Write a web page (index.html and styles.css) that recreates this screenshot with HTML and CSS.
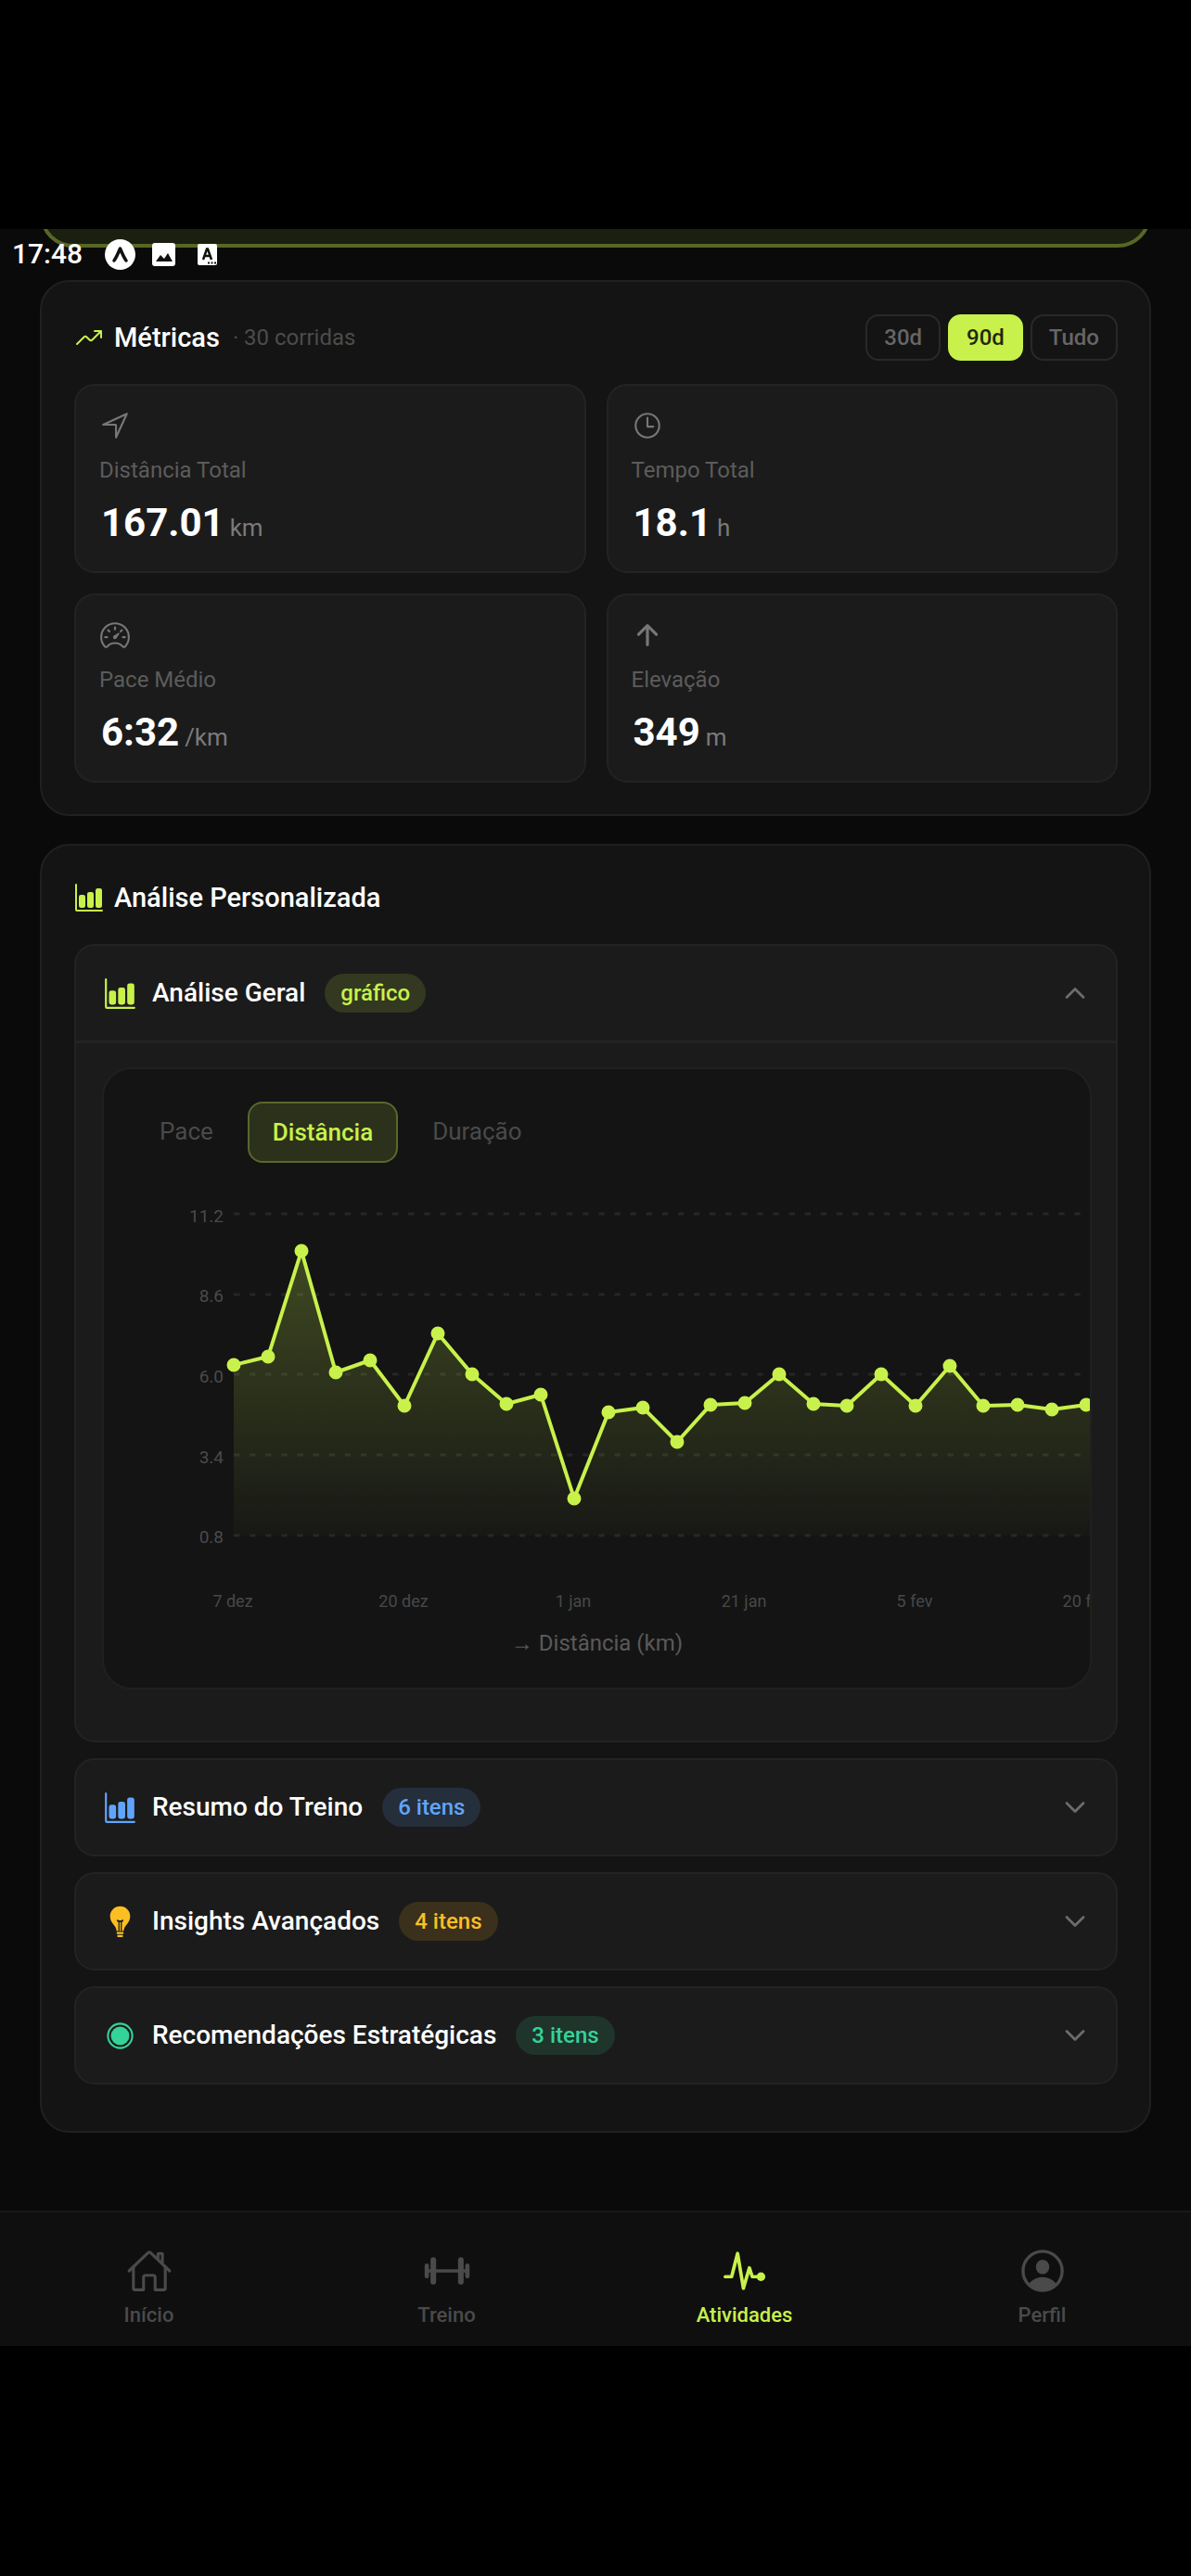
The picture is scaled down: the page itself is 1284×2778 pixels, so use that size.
FILE: index.html
```html
<!DOCTYPE html>
<html lang="pt-BR">
<head>
<meta charset="utf-8">
<meta name="viewport" content="width=device-width, initial-scale=1">
<title>Atividades</title>
<link rel="stylesheet" href="styles.css">
</head>
<body>
<svg class="sprite" aria-hidden="true">
  <symbol id="i-bars" viewBox="0 0 512 512"><path fill="currentColor" d="M480 496H48a32 32 0 01-32-32V32a16 16 0 0132 0v432h432a16 16 0 010 32zM156 432h-40a36 36 0 01-36-36V244a36 36 0 0136-36h40a36 36 0 0136 36v152a36 36 0 01-36 36zM300 432h-40a36 36 0 01-36-36V196a36 36 0 0136-36h40a36 36 0 0136 36v200a36 36 0 01-36 36zM444 432h-40a36 36 0 01-36-36V132a36 36 0 0136-36h40a36 36 0 0136 36v264a36 36 0 01-36 36z"/></symbol>
  <symbol id="i-down" viewBox="0 0 512 512"><path fill="none" stroke="currentColor" stroke-width="44" stroke-linecap="round" stroke-linejoin="round" d="M112 184l144 144 144-144"/></symbol>
  <symbol id="i-up" viewBox="0 0 512 512"><path fill="none" stroke="currentColor" stroke-width="44" stroke-linecap="round" stroke-linejoin="round" d="M112 328l144-144 144 144"/></symbol>
</svg>

<div class="app">
  <div class="status">
    <span class="status-time">17:48</span>
    <svg class="status-circle" viewBox="0 0 33 33" aria-hidden="true"><circle cx="16.500" cy="16.500" r="16.500" fill="#fff"/><path d="M10 23c3-4 4.500-8.500 6.500-13 2 4.500 3.500 9 6.500 13" fill="none" stroke="#111" stroke-width="3.500" stroke-linecap="round" stroke-linejoin="round"/></svg>
    <svg class="status-image" viewBox="0 0 25 25" aria-hidden="true"><rect width="25" height="25" rx="3" fill="#fff"/><path d="M4 20l5-7 4 4 4-6 5 9z" fill="#111"/></svg>
    <svg class="status-doc" viewBox="0 0 21 23" aria-hidden="true"><rect width="21" height="23" rx="2" fill="#fff"/><path d="M6 17L10 5.500h1L15 17M7.500 13h6" fill="none" stroke="#111" stroke-width="2.500"/><path d="M11 20.500h2M14.500 20.500h2M18 20.500h2" stroke="#111" stroke-width="2"/></svg>
  </div>

  <main class="scroll">
    <div class="highlight"></div>

    <section class="card metrics">
      <header class="metrics-head">
        <svg class="icon-title lime" viewBox="0 0 512 512" fill="none" stroke="currentColor" stroke-width="32" stroke-linecap="round" stroke-linejoin="round" aria-hidden="true"><path d="M352 144h112v112M48 368l121-121a32 32 0 0146 0l50 50a32 32 0 0046 0L448 160"/></svg>
        <h2>Métricas</h2>
        <span class="count">· 30 corridas</span>
        <div class="ranges">
          <button type="button" class="range">30d</button>
          <button type="button" class="range range-on">90d</button>
          <button type="button" class="range">Tudo</button>
        </div>
      </header>
      <div class="tiles">
        <div class="tile">
          <svg class="icon-tile" viewBox="0 0 512 512" fill="none" stroke="currentColor" stroke-width="32" stroke-linejoin="round" aria-hidden="true"><path d="M448 64L64 240h200a8 8 0 018 8v200z"/></svg>
          <span class="tile-label">Distância Total</span>
          <p class="tile-value"><strong>167.01</strong><span>km</span></p>
        </div>
        <div class="tile">
          <svg class="icon-tile" viewBox="0 0 512 512" fill="none" stroke="currentColor" stroke-width="32" stroke-linecap="round" stroke-linejoin="round" aria-hidden="true"><circle cx="256" cy="256" r="192"/><path d="M256 128v144h96"/></svg>
          <span class="tile-label">Tempo Total</span>
          <p class="tile-value"><strong>18.1</strong><span>h</span></p>
        </div>
        <div class="tile">
          <svg class="icon-tile" viewBox="0 0 512 512" fill="none" stroke="currentColor" stroke-width="32" stroke-linecap="round" aria-hidden="true"><path d="M326 232l-47 75a31 31 0 01-7 7 30 30 0 01-35-49l75-47a10 10 0 0112 0 10 10 0 012 14z" fill="currentColor" stroke="none"/><path stroke-miterlimit="10" d="M256 64C132 64 32 164 32 288a223 223 0 0056 148l4 4a25 25 0 0037 0 173 173 0 01254 0 25 25 0 0037 0l4-4a223 223 0 0056-148C480 164 380 64 256 64z"/><path d="M256 128v32M416 288h-32M128 288H96M165 197l-22-22M347 197l22-22"/></svg>
          <span class="tile-label">Pace Médio</span>
          <p class="tile-value"><strong>6:32</strong><span>/km</span></p>
        </div>
        <div class="tile">
          <svg class="icon-tile" viewBox="0 0 512 512" fill="none" stroke="currentColor" stroke-width="48" stroke-linecap="round" stroke-linejoin="round" aria-hidden="true"><path d="M112 244l144-144 144 144M256 120v292"/></svg>
          <span class="tile-label">Elevação</span>
          <p class="tile-value"><strong>349</strong><span>m</span></p>
        </div>
      </div>
    </section>

    <section class="card analysis">
      <header class="analysis-head">
        <svg class="icon-title lime" aria-hidden="true"><use href="#i-bars"/></svg>
        <h2>Análise Personalizada</h2>
      </header>

      <div class="panels">
        <article class="panel">
          <button type="button" class="panel-head" aria-expanded="true">
            <svg class="icon-panel lime" aria-hidden="true"><use href="#i-bars"/></svg>
            <span class="panel-title">Análise Geral</span>
            <span class="pill pill-lime">gráfico</span>
            <svg class="chevron" aria-hidden="true"><use href="#i-up"/></svg>
          </button>
          <div class="panel-body">
            <div class="chart-card">
              <div class="tabs">
                <button type="button" class="tab">Pace</button>
                <button type="button" class="tab tab-on">Distância</button>
                <button type="button" class="tab">Duração</button>
              </div>
              <div class="chart-view">
                <svg class="chart" width="1160" height="456" viewBox="0 0 1160 456" role="img" aria-label="Distância (km)">
                  <defs><linearGradient id="fade" gradientUnits="userSpaceOnUse" x1="0" y1="58" x2="0" y2="366"><stop offset="0" stop-color="#c8f14b" stop-opacity=".24"/><stop offset="1" stop-color="#c8f14b" stop-opacity=".02"/></linearGradient></defs>
                  <g class="grid"><path d="M140 19H1160"/><path d="M140 106H1160"/><path d="M140 192H1160"/><path d="M140 279H1160"/><path d="M140 366H1160"/></g>
                  <path fill="url(#fade)" d="M140 366V182L177 173L213 59L250 190L287 177L324 226L360 148L397 192L434 224L471 214L507 326L544 233L581 228L618 265L654 225L691 223L728 192L765 224L801 226L838 192L875 226L912 183L948 226L985 225L1022 230L1059 225L1095 222V366z"/>
                  <path class="line" d="M140 182L177 173L213 59L250 190L287 177L324 226L360 148L397 192L434 224L471 214L507 326L544 233L581 228L618 265L654 225L691 223L728 192L765 224L801 226L838 192L875 226L912 183L948 226L985 225L1022 230L1059 225L1095 222"/>
                  <path class="dots" d="M140 182h0M177 173h0M213 59h0M250 190h0M287 177h0M324 226h0M360 148h0M397 192h0M434 224h0M471 214h0M507 326h0M544 233h0M581 228h0M618 265h0M654 225h0M691 223h0M728 192h0M765 224h0M801 226h0M838 192h0M875 226h0M912 183h0M948 226h0M985 225h0M1022 230h0M1059 225h0"/>
                  <g class="y-labels"><text x="129" y="28">11.2</text><text x="129" y="114">8.6</text><text x="129" y="201">6.0</text><text x="129" y="288">3.4</text><text x="129" y="374">0.8</text></g>
                  <g class="x-labels"><text x="139" y="443">7 dez</text><text x="323" y="443">20 dez</text><text x="506" y="443">1 jan</text><text x="690" y="443">21 jan</text><text x="874" y="443">5 fev</text><text x="1058" y="443">20 fev</text></g>
                </svg>
              </div>
              <p class="legend">→ Distância (km)</p>
            </div>
          </div>
        </article>

        <article class="panel">
          <button type="button" class="panel-head" aria-expanded="false">
            <svg class="icon-panel blue" aria-hidden="true"><use href="#i-bars"/></svg>
            <span class="panel-title">Resumo do Treino</span>
            <span class="pill pill-blue">6 itens</span>
            <svg class="chevron" aria-hidden="true"><use href="#i-down"/></svg>
          </button>
        </article>
        <article class="panel">
          <button type="button" class="panel-head" aria-expanded="false">
            <svg class="icon-panel amber" viewBox="0 0 512 512" aria-hidden="true"><path fill="currentColor" d="M256 10C168 10 98 80 98 168c0 54 22 88 46 120 28 36 50 60 54 104 2 8 6 12 14 12h16V258c-14-4-26-10-26-24s14-16 24-8c18 12 42 12 60 0 10-8 24-6 24 8s-12 20-26 24v146h16c8 0 12-4 14-12 4-44 26-68 54-104 24-32 46-66 46-120 0-88-70-158-158-158z"/><path fill="currentColor" d="M247 262h18v142h-18z"/><path fill="none" stroke="currentColor" stroke-width="32" stroke-linecap="round" d="M216 434h80M226 482h60"/></svg>
            <span class="panel-title">Insights Avançados</span>
            <span class="pill pill-amber">4 itens</span>
            <svg class="chevron" aria-hidden="true"><use href="#i-down"/></svg>
          </button>
        </article>
        <article class="panel">
          <button type="button" class="panel-head" aria-expanded="false">
            <svg class="icon-panel green" viewBox="0 0 512 512" aria-hidden="true"><circle cx="256" cy="256" r="192" fill="none" stroke="currentColor" stroke-width="30"/><circle cx="256" cy="256" r="146" fill="currentColor"/></svg>
            <span class="panel-title">Recomendações Estratégicas</span>
            <span class="pill pill-green">3 itens</span>
            <svg class="chevron" aria-hidden="true"><use href="#i-down"/></svg>
          </button>
        </article>
      </div>
    </section>
  </main>

  <nav class="tabbar">
    <a href="#inicio"><svg viewBox="0 0 512 512" fill="none" stroke="currentColor" stroke-width="32" stroke-linecap="round" stroke-linejoin="round" aria-hidden="true"><path d="M80 212v236a16 16 0 0016 16h96V328a24 24 0 0124-24h80a24 24 0 0124 24v136h96a16 16 0 0016-16V212"/><path d="M480 256L267 52c-5-5-17-5-22 0L32 256M400 179V64h-48v69"/></svg>Início</a>
    <a href="#treino"><svg viewBox="0 0 512 512" fill="none" stroke="currentColor" stroke-linecap="round" aria-hidden="true"><path stroke-width="36" d="M32 256h448"/><path stroke-width="48" d="M32 198v116M480 198v116"/><path stroke-width="62" d="M104 136v240M408 136v240"/></svg>Treino</a>
    <a href="#atividades" class="current" aria-current="page"><svg viewBox="0 0 512 512" fill="none" stroke="currentColor" stroke-width="38" stroke-linecap="round" stroke-linejoin="round" aria-hidden="true"><path d="M40 320h70l66-256 64 384 66-226 32 98h94"/><circle cx="434" cy="320" r="48" fill="currentColor" stroke="none"/></svg>Atividades</a>
    <a href="#perfil"><svg viewBox="0 0 512 512" aria-hidden="true"><circle cx="256" cy="256" r="216" fill="none" stroke="currentColor" stroke-width="34"/><ellipse cx="256" cy="212" rx="74" ry="80" fill="currentColor"/><path fill="currentColor" d="M100 404C140 350 196 324 256 324s116 26 156 80a216 216 0 01-312 0z"/></svg>Perfil</a>
  </nav>
</div>
</body>
</html>
```
FILE: styles.css
```css
* { box-sizing: border-box; }

:root {
  --lime: #c8f14b;
  --blue: #60a5fa;
  --amber: #fbbf24;
  --green: #34d399;
  --card: #141414;
  --tile: #1b1b1b;
  --edge: #232323;
}

body {
  margin: 0;
  padding: 247px 0 248px;
  background: #000;
  color: #fff;
  font: 24px/28px Roboto, "Noto Sans", sans-serif;
}

h2, p { margin: 0; }
button { font: inherit; color: inherit; background: none; border: 0; padding: 0; margin: 0; }
svg { flex: none; display: block; }
.sprite { position: absolute; width: 0; height: 0; }

.app { position: relative; overflow: hidden; background: #0a0a0a; }

.status {
  position: absolute;
  top: 10px;
  left: 13px;
  display: flex;
  align-items: center;
  height: 34px;
}
.status-time { font-size: 30px; font-weight: 500; }
.status-circle { width: 33px; height: 33px; margin-left: 24px; }
.status-image { width: 25px; height: 25px; margin-left: 18px; }
.status-doc { width: 21px; height: 23px; margin-left: 24px; }

.scroll { padding: 0 43px 84px; }

.highlight {
  height: 100px;
  margin: -80px 0 35px;
  background: #1b1f10;
  border: 4px solid #586723;
  border-radius: 36px;
}

.card {
  background: var(--card);
  border: 2px solid #202020;
  border-radius: 32px;
}
.card h2 { font-size: 29px; line-height: 40px; font-weight: 500; }

.metrics { padding: 35px 34px 34px 35px; }
.metrics-head { display: flex; align-items: center; margin-bottom: 25px; }
.metrics-head h2 { margin: 0 14px 0 11px; }
.icon-title { width: 32px; height: 32px; }
.lime { color: var(--lime); }
.blue { color: var(--blue); }
.amber { color: var(--amber); }
.green { color: var(--green); }
.count { color: #4c4c4c; }

.ranges { display: flex; gap: 8px; margin-left: auto; }
.range {
  height: 50px;
  padding: 0 18px;
  border: 2px solid #292929;
  border-radius: 14px;
  color: #666;
  font-weight: 500;
}
.range-on { background: var(--lime); border-color: var(--lime); color: #22280c; }

.tiles { display: grid; grid-template-columns: 1fr 1fr; gap: 22px; }
.tile {
  display: flex;
  flex-direction: column;
  gap: 17px;
  padding: 26px 25px;
  background: var(--tile);
  border: 2px solid var(--edge);
  border-radius: 22px;
}
.icon-tile { width: 34px; height: 34px; color: #777; }
.tile-label { color: #5c5c5c; }
.tile-value {
  display: flex;
  align-items: baseline;
  gap: 6px;
  padding-left: 2px;
  line-height: 52px;
}
.tile-value strong { font-size: 42px; font-weight: 700; }
.tile-value span { font-size: 26px; line-height: 28px; color: #7a7a7a; }

.analysis { margin-top: 30px; padding: 36px 34px 50px 35px; }
.analysis-head { display: flex; align-items: center; gap: 11px; margin-bottom: 30px; }
.panels { display: flex; flex-direction: column; gap: 17px; }
.panel {
  background: var(--tile);
  border: 2px solid var(--edge);
  border-radius: 22px;
}
.panel-head {
  display: flex;
  align-items: center;
  width: 100%;
  height: 102px;
  padding: 0 28px 0 30px;
}
.icon-panel { width: 35px; height: 35px; }
.panel-title { margin: 0 21px 0 17px; font-size: 28px; line-height: 36px; font-weight: 500; }
.pill { padding: 7px 17px; border-radius: 21px; font-weight: 500; }
.pill-lime { color: var(--lime); background: #333820; }
.pill-blue { color: var(--blue); background: #252e3b; }
.pill-amber { color: var(--amber); background: #3a301c; }
.pill-green { color: var(--green); background: #1f342b; }
.chevron { width: 32px; height: 32px; margin-left: auto; color: #6c6c6c; }

.panel-body { border-top: 3px solid var(--edge); padding: 26px 26px 55px 28px; }
.chart-card {
  padding: 35px 0 34px;
  background: var(--card);
  border: 2px solid #202020;
  border-radius: 32px;
}
.tabs { display: flex; align-items: flex-start; gap: 11px; padding-left: 34px; }
.tab { height: 64px; padding: 0 26px; font-size: 26px; color: #4a4a4a; }
.tab-on {
  height: 66px;
  padding: 0 25px;
  border: 2px solid #58682a;
  border-radius: 16px;
  background: #2c311b;
  color: var(--lime);
  font-weight: 500;
}
.chart-view { margin-top: 36px; overflow: hidden; }
.grid { stroke: #262626; stroke-width: 3; stroke-dasharray: 6.4 10.7; }
.line { fill: none; stroke: var(--lime); stroke-width: 4; stroke-linejoin: round; }
.dots { fill: none; stroke: var(--lime); stroke-width: 15; stroke-linecap: round; }
.y-labels { fill: #4a4a4a; font-size: 19px; text-anchor: end; }
.x-labels { fill: #484848; font-size: 18px; text-anchor: middle; }
.legend { margin-top: 12px; text-align: center; color: #5a5a5a; }

.tabbar {
  display: grid;
  grid-template-columns: repeat(4, 1fr);
  padding: 38px 0 20px;
  border-top: 2px solid #181818;
  background: #0f0f0f;
}
.tabbar a {
  display: flex;
  flex-direction: column;
  align-items: center;
  gap: 10px;
  color: #4a4a4a;
  font-size: 22px;
  line-height: 26px;
  font-weight: 500;
  text-decoration: none;
}
.tabbar svg { width: 50px; height: 50px; }
.tabbar .current { color: var(--lime); }
```
